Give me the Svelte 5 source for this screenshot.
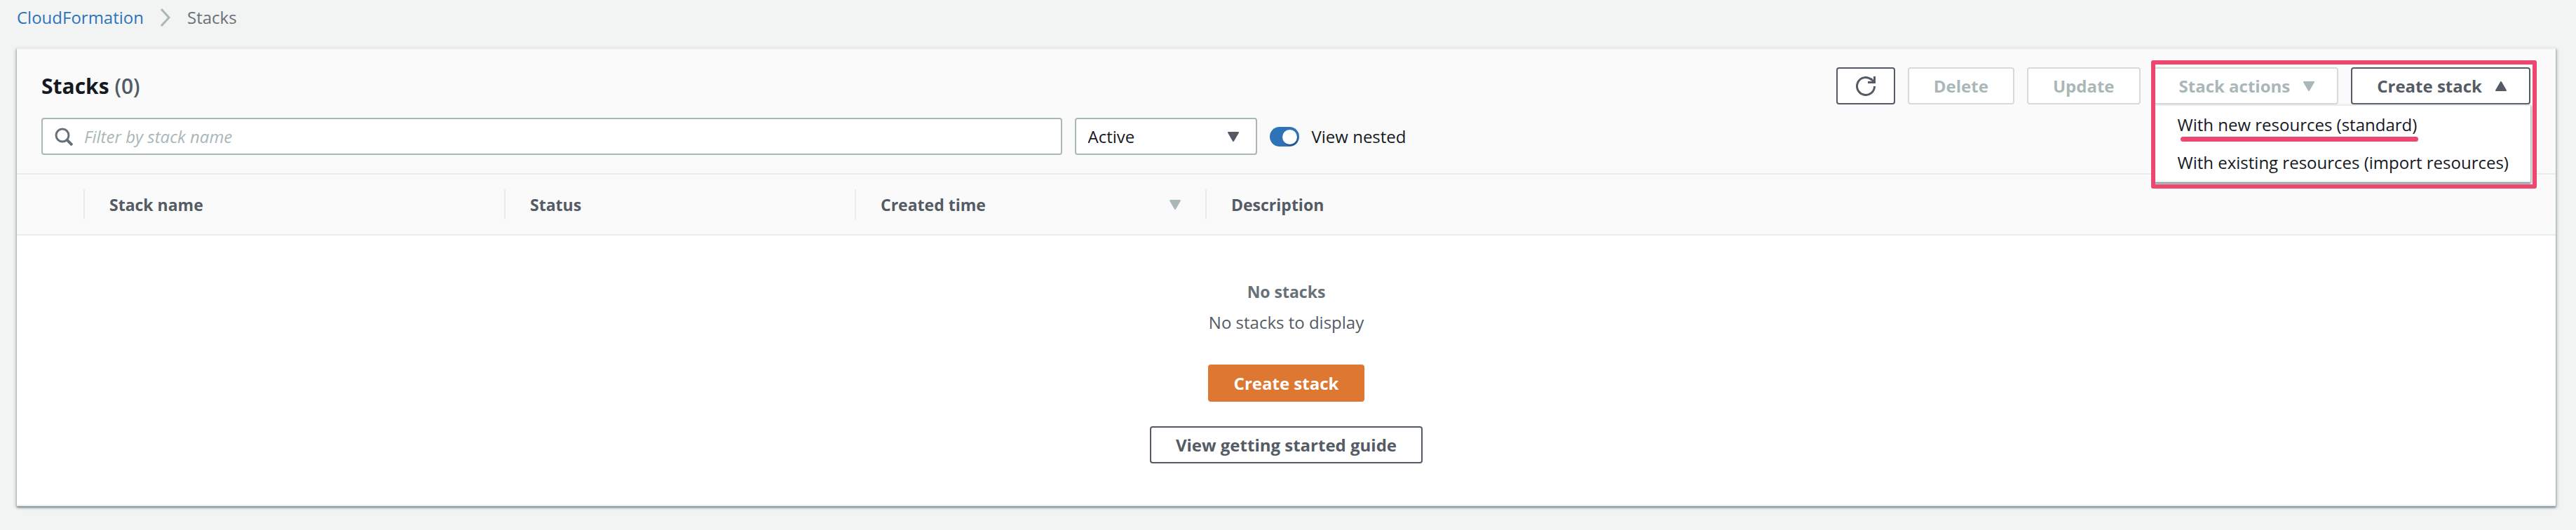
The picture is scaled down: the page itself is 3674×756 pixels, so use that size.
<script>
  let filter = $state('');
  let status = $state('Active');
  let nested = $state(true);
  let menuOpen = $state(true);

  const menuItems = [
    { label: 'With new resources (standard)', marked: true },
    { label: 'With existing resources (import resources)', marked: false }
  ];
</script>

{#snippet caret(up)}
  <svg class="caret" class:up viewBox="0 0 18 14" aria-hidden="true">
    <path d="M2 1h14L9 13z" fill="currentColor" stroke="currentColor" stroke-width="2" stroke-linejoin="round" />
  </svg>
{/snippet}

<div class="page">
  <nav class="breadcrumbs" aria-label="Breadcrumb">
    <a href="#cloudformation">CloudFormation</a>
    <svg class="chevron" viewBox="0 0 16 26" aria-hidden="true">
      <path d="M2 1l11 12L2 25" fill="none" stroke="#aab7b8" stroke-width="3" />
    </svg>
    <span>Stacks</span>
  </nav>

  <main class="panel">
    <header class="head">
      <div class="row title-row">
        <h1>Stacks <span>(0)</span></h1>
        <div class="actions">
          <button class="btn icon-btn" aria-label="Refresh">
            <svg class="refresh" viewBox="0 0 28 28" aria-hidden="true">
              <path d="M26.500 14a12.500 12.500 0 1 1-4-9.200" fill="none" stroke="currentColor" stroke-width="3" />
              <path d="M26.500 0v8.500H17" fill="none" stroke="currentColor" stroke-width="3" />
              <path d="M21 3l5 5" fill="none" stroke="currentColor" stroke-width="3" />
            </svg>
          </button>
          <button class="btn" disabled>Delete</button>
          <button class="btn" disabled>Update</button>
          <div class="callout">
            <button class="btn" disabled>Stack actions {@render caret(false)}</button>
            <button class="btn" aria-expanded={menuOpen} onclick={() => (menuOpen = !menuOpen)}>
              Create stack {@render caret(true)}
            </button>
            {#if menuOpen}
              <ul class="menu">
                {#each menuItems as item}
                  <li><a href="#create" class:marked={item.marked}>{item.label}</a></li>
                {/each}
              </ul>
            {/if}
            <div class="frame"></div>
          </div>
        </div>
      </div>

      <div class="row filter-row">
        <label class="search">
          <svg class="glass" viewBox="0 0 26 26" aria-hidden="true">
            <circle cx="11" cy="11" r="9" fill="none" stroke="#687078" stroke-width="3" />
            <path d="M17 17l8 8" stroke="#687078" stroke-width="4" />
          </svg>
          <input type="text" placeholder="Filter by stack name" aria-label="Filter by stack name" bind:value={filter} />
        </label>
        <label class="select">
          <select aria-label="Stack status" bind:value={status}>
            <option>Active</option>
          </select>
          {@render caret(false)}
        </label>
        <label class="toggle">
          <input type="checkbox" bind:checked={nested} />
          View nested
        </label>
      </div>
    </header>

    <table>
      <colgroup>
        <col class="c-pick" />
        <col class="c-name" />
        <col class="c-mid" />
        <col class="c-mid" />
        <col />
      </colgroup>
      <thead>
        <tr>
          <th aria-label="Select"><div></div></th>
          <th><div>Stack name</div></th>
          <th><div>Status</div></th>
          <th><div>Created time {@render caret(false)}</div></th>
          <th><div>Description</div></th>
        </tr>
      </thead>
      <tbody>
        <tr>
          <td colspan="5">
            <div class="empty">
              <strong>No stacks</strong>
              <p>No stacks to display</p>
              <button class="btn primary">Create stack</button>
              <button class="btn">View getting started guide</button>
            </div>
          </td>
        </tr>
      </tbody>
    </table>
  </main>
</div>

<style>
  :global(body) {
    margin: 0;
    background: #f2f3f3;
  }

  .page {
    box-sizing: border-box;
    min-height: 100vh;
    padding: 0 29px 34px 24px;
    font-family: 'Open Sans', 'Noto Sans', sans-serif;
    font-size: 24px;
    line-height: 44px;
    color: #16191f;
  }

  .page :global(*) {
    box-sizing: border-box;
  }

  .breadcrumbs {
    display: flex;
    align-items: center;
    gap: 23px;
    height: 50px;
    margin-bottom: 18px;
    color: #687078;
  }

  .breadcrumbs a {
    color: #2e73b8;
    text-decoration: none;
  }

  .chevron {
    width: 16px;
    height: 26px;
  }

  .panel {
    background: #fff;
    border-top: 2px solid #eaeded;
    border-bottom: 2px solid #eaeded;
    box-shadow: 0 2px 2px #879596, 2px 2px 4px #b8bfc4, -2px 2px 4px #c4cacc;
  }

  .head {
    padding: 26px 36px 26px 35px;
    background: #fafafa;
  }

  .row {
    display: flex;
    align-items: center;
    gap: 18px;
  }

  .title-row {
    justify-content: space-between;
    margin-bottom: 19px;
  }

  h1 {
    margin: 0;
    font-size: 30px;
    line-height: 44px;
    font-weight: 700;
  }

  h1 span {
    color: #545b64;
    font-weight: 600;
  }

  .actions {
    display: flex;
    gap: 18px;
  }

  .btn {
    display: inline-flex;
    align-items: center;
    justify-content: center;
    height: 53px;
    padding: 0 35px;
    border: 2px solid #545b64;
    border-radius: 4px;
    background: #fff;
    color: #545b64;
    font: 700 24px 'Open Sans', 'Noto Sans', sans-serif;
    white-space: nowrap;
    cursor: pointer;
  }

  .btn:disabled {
    border-color: #d5dbdb;
    color: #aab7b8;
    cursor: default;
  }

  .btn .caret {
    margin-left: 18px;
    margin-right: -4px;
  }

  .icon-btn {
    padding: 0 26px;
  }

  .refresh {
    width: 28px;
    height: 28px;
  }

  .primary {
    border-color: #dd7732;
    background: #dd7732;
    color: #fff;
  }

  .caret {
    flex: none;
    width: 18px;
    height: 14px;
  }

  .caret.up {
    transform: rotate(180deg);
  }

  .callout {
    position: relative;
    display: flex;
    gap: 18px;
  }

  .menu {
    position: absolute;
    z-index: 1;
    top: 53px;
    left: 0;
    right: 0;
    margin: 0;
    padding: 4px 0 1px;
    list-style: none;
    background: #fff;
    border-top: 2px solid #eaeded;
    border-bottom: 2px solid #eaeded;
    box-shadow: 0 2px 2px #879596, 2px 2px 4px #b8bfc4;
  }

  .menu li {
    padding: 0 35px;
    height: 48px;
    line-height: 46px;
    white-space: nowrap;
  }

  .menu li + li {
    margin-top: 6px;
  }

  .menu a {
    display: inline-block;
    height: 48px;
    color: inherit;
    text-decoration: none;
  }

  .menu a.marked {
    position: relative;
  }

  .menu a.marked::after {
    content: '';
    position: absolute;
    left: 4px;
    right: -2px;
    top: 40px;
    height: 7px;
    border-radius: 4px;
    background: #ee476f;
  }

  .frame {
    position: absolute;
    z-index: 2;
    inset: -10px -9px -120px -3px;
    border: 6px solid #ee476f;
    border-radius: 3px;
    pointer-events: none;
  }

  .search {
    position: relative;
    flex: 0 1 41%;
  }

  .search input,
  .select select {
    display: block;
    width: 100%;
    height: 53px;
    border: 2px solid #aab7b8;
    border-radius: 4px;
    background: #fff;
    color: #16191f;
    font: 24px 'Open Sans', 'Noto Sans', sans-serif;
    appearance: none;
  }

  .search input {
    padding: 0 18px 0 59px;
  }

  .search input::placeholder {
    color: #aab7b8;
    font-style: italic;
    opacity: 1;
  }

  .glass {
    position: absolute;
    left: 19px;
    top: 14px;
    width: 26px;
    height: 26px;
  }

  .select {
    position: relative;
    width: 260px;
    color: #545b64;
  }

  .select select {
    padding: 0 18px 0 17px;
  }

  .select .caret {
    position: absolute;
    right: 25px;
    top: 20px;
    pointer-events: none;
  }

  .toggle {
    display: flex;
    align-items: center;
    gap: 18px;
    height: 44px;
  }

  .toggle input {
    appearance: none;
    width: 42px;
    height: 28px;
    margin: 0;
    padding: 4px 3px;
    border-radius: 14px;
    background: #687078;
  }

  .toggle input::before {
    content: '';
    display: block;
    width: 21px;
    height: 21px;
    border-radius: 50%;
    background: #fff;
  }

  .toggle input:checked {
    background: #2e73b8;
  }

  .toggle input:checked::before {
    margin-left: auto;
    box-shadow: 1px 2px 1px #1c5187;
  }

  table {
    width: 100%;
    table-layout: fixed;
    border-collapse: separate;
    border-spacing: 0;
  }

  .c-pick {
    width: 97px;
  }

  .c-name {
    width: 600px;
  }

  .c-mid {
    width: 500px;
  }

  th {
    padding: 21px 0;
    border-top: 2px solid #eaeded;
    border-bottom: 2px solid #eaeded;
    background: #fafafa;
    color: #545b64;
    font-size: 23px;
    font-weight: 700;
    text-align: left;
  }

  th div {
    display: flex;
    align-items: center;
    justify-content: space-between;
    height: 43px;
    padding: 0 34px 0 35px;
    border-right: 2px solid #eaeded;
  }

  th:last-child div {
    border-right: 0;
  }

  th .caret {
    color: #aab7b8;
  }

  td {
    padding: 58px 0 59px;
  }

  .empty {
    display: flex;
    flex-direction: column;
    align-items: center;
    color: #545b64;
  }

  .empty strong {
    color: #687078;
    font-size: 23px;
  }

  .empty p {
    margin: 0 0 38px;
  }

  .empty .primary {
    margin-bottom: 35px;
  }
</style>
